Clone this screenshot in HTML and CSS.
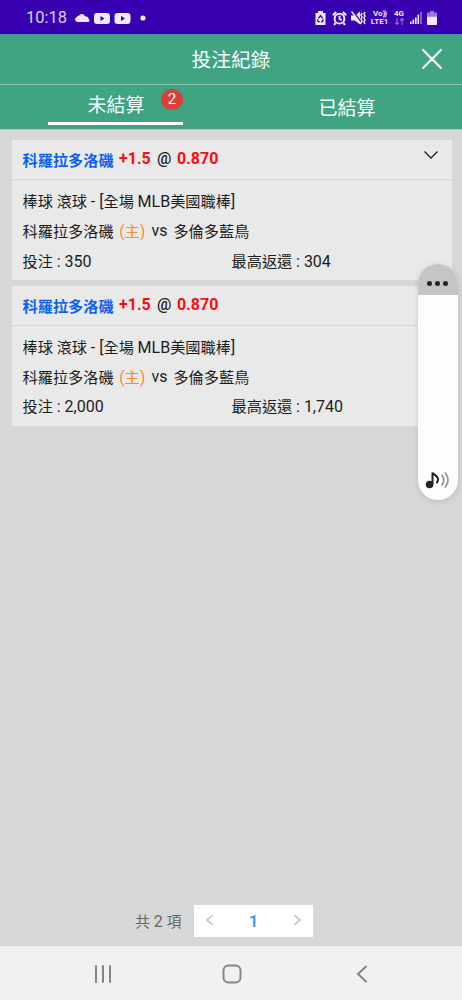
FILE: index.html
```html
<!DOCTYPE html>
<html lang="zh-Hant">
<head>
<meta charset="utf-8">
<title>投注紀錄</title>
<link rel="stylesheet" href="styles.css">
</head>
<body>
<div class="status">
  <span class="clock">10:18</span>
  <svg class="notices" width="76" height="16" viewBox="0 0 76 16">
    <path class="fill" d="M3 13a2.700 2.700 0 0 1-.2-5.100C3.500 7 4.300 6.700 5 6.800 6.500 4.300 10 4.700 11 7.200c2 .1 3.500 1 3.800 3 1 .4 1 2.800-.8 2.800z"/>
    <rect class="fill" x="20" y="4" width="16" height="11" rx="3"/><path class="hole" d="M26.500 7v5l4-2.500z"/>
    <rect class="fill" x="40.500" y="4" width="16" height="11" rx="3"/><path class="hole" d="M47 7v5l4-2.500z"/>
    <circle class="fill" cx="69" cy="9" r="2.600"/>
  </svg>
  <svg class="battery-saver" width="11" height="16" viewBox="0 0 11 16">
    <path class="fill" d="M3 1h5v2h2.500v12H.5V3H3z"/>
    <path class="hole-line" d="M3.300 8.400 5.500 5.500 7.700 8.400M8.300 9.500 7.500 11.700H6M4.800 11.700H3L2.500 9.500"/>
  </svg>
  <svg class="alarm" width="15" height="16" viewBox="0 0 15 16">
    <circle class="ring" cx="7.500" cy="8.700" r="4.900"/><path class="ring" d="M7.500 5.700v3.300l2.200 1.200"/>
    <path class="ring" d="M.8 5.200 4.200 2.100M14.200 5.200 10.800 2.100M3.600 13 2 14.800M11.400 13 13 14.800"/>
  </svg>
  <svg class="mute" width="15" height="16" viewBox="0 0 15 16">
    <path class="fill" d="M0 5.500h4l5-4v13l-5-4H0z"/><path class="slash" d="M1 .5 10.500 12.500"/><path class="thin" d="M.5 1.500 10 14"/>
    <path class="thin" d="M11 3 10 5 11 7 10 9 11 11 10 13M14 2 13 4 14 6 13 8 14 10 13 12 14 14"/>
  </svg>
  <span class="volte"><span class="vo">Vo<i>))</i></span><span>LTE1</span></span>
  <span class="net"><span>4G</span><svg class="arrows" width="11" height="8" viewBox="0 0 11 8"><path d="M3 0v6.500M1 4.500l2 2 2-2M8 7V.5M6 2.500l2-2 2 2"/></svg></span>
  <svg class="signal" width="12" height="14" viewBox="0 0 12 14">
    <path class="fill" d="M0 10.500h1.600V13H0zM2.500 8.500h1.600V13H2.500zM5 6.500h1.600V13H5zM7.500 3.500h1.600V13H7.500z"/><path class="faint" d="M10.200 1h1.600v12h-1.600z"/>
  </svg>
  <svg class="battery" width="10" height="15" viewBox="0 0 10 15">
    <path class="faint" d="M3 0h4v1.500h2q1 0 1 1V5.500H0v-3q0-1 1-1h2z"/><path class="fill" d="M0 5.500h10V13q0 1-1 1H1q-1 0-1-1z"/>
  </svg>
</div>

<header class="header">
  <h1>投注紀錄</h1>
  <svg class="close" width="22" height="22" viewBox="0 0 22 22"><path d="M2 2 20 20M20 2 2 20"/></svg>
</header>
<nav class="tabs">
  <div class="tab active"><span class="label">未結算</span><span class="badge">2</span></div>
  <div class="tab"><span class="label">已結算</span></div>
</nav>

<main class="main">
  <section class="card">
    <div class="card-head">
      <span class="team">科羅拉多洛磯</span><b class="odds handicap">+1.5</b><b class="at">@</b><b class="odds">0.870</b>
      <svg class="chevron" width="16" height="10" viewBox="0 0 16 10"><path d="M1.500 1.500 8 8 14.500 1.500"/></svg>
    </div>
    <div class="card-body">
      <div class="row league"><span>棒球 滾球 <em>- [</em>全場 <em>MLB</em>美國職棒<em>]</em></span></div>
      <div class="row"><span>科羅拉多洛磯</span><span class="host"><em>(</em>主<em>)</em></span><em class="vs">vs</em><span>多倫多藍鳥</span></div>
      <div class="row money"><span>投注 <em>: 350</em></span><span>最高返還 <em>: 304</em></span></div>
    </div>
  </section>
  <section class="card">
    <div class="card-head">
      <span class="team">科羅拉多洛磯</span><b class="odds handicap">+1.5</b><b class="at">@</b><b class="odds">0.870</b>
    </div>
    <div class="card-body">
      <div class="row league"><span>棒球 滾球 <em>- [</em>全場 <em>MLB</em>美國職棒<em>]</em></span></div>
      <div class="row"><span>科羅拉多洛磯</span><span class="host"><em>(</em>主<em>)</em></span><em class="vs">vs</em><span>多倫多藍鳥</span></div>
      <div class="row money"><span>投注 <em>: 2,000</em></span><span>最高返還 <em>: 1,740</em></span></div>
    </div>
  </section>
</main>

<footer class="pager">
  <span class="total">共 <em>2</em> 項</span>
  <div class="pages">
    <svg width="10" height="12" viewBox="0 0 10 12"><path d="M8 1 2 6l6 5"/></svg>
    <b>1</b>
    <svg width="10" height="12" viewBox="0 0 10 12"><path d="m2 1 6 5-6 5"/></svg>
  </div>
</footer>

<div class="navbar">
  <svg width="18" height="18" viewBox="0 0 18 18"><path d="M2 1v16M9 1v16M16 1v16"/></svg>
  <svg class="home" width="20" height="20" viewBox="0 0 20 20"><rect x="1.500" y="1.500" width="17" height="17" rx="5"/></svg>
  <svg width="12" height="18" viewBox="0 0 12 18"><path d="M10 1.500 2 9l8 7.500"/></svg>
</div>

<aside class="volume">
  <div class="volume-top"><i></i><i></i><i></i></div>
  <svg width="26" height="20" viewBox="0 0 26 20">
    <circle class="note" cx="4.600" cy="14.500" r="3.800"/><path class="stem" d="M7.500 14V2.500c.8 2.300 5.500 2.500 5.500 7.300 0 1.500-.5 2.500-1.600 3.300"/>
    <path class="wave" d="M17 5.500q3.600 4.500 0 9.500M20.500 3q5 7 0 14"/>
  </svg>
</aside>
</body>
</html>
```

FILE: styles.css
```css
* { box-sizing: border-box; }
body {
  margin: 0;
  width: 462px;
  height: 1000px;
  display: flex;
  flex-direction: column;
  overflow: hidden;
  position: relative;
  background: #d7d7d7;
  color: #1c1c1c;
  font-family: Roboto, "Noto Sans CJK TC", sans-serif;
}
svg { display: block; flex: none; }
em, i { font-style: normal; }

.status {
  height: 34px;
  flex: none;
  display: flex;
  align-items: center;
  padding: 2px 25px 0 26px;
  background: #3900b1;
  color: #efe6ff;
}
.clock { width: 48px; font-size: 16.500px; line-height: 32px; color: #ddcffa; }
.notices { margin-right: auto; margin-top: -2px; }
.fill { fill: #f0e9ff; }
.faint { fill: #9479d6; }
.hole { fill: #3900b1; }
.hole-line { fill: none; stroke: #3900b1; stroke-width: 1.300; }
.ring { fill: none; stroke: #f0e9ff; stroke-width: 2; }
.slash { stroke: #3900b1; stroke-width: 1.800; }
.thin { fill: none; stroke: #f0e9ff; stroke-width: 1.500; }
.battery-saver { margin-right: 6px; }
.mute { margin-left: 4px; }
.volte, .net {
  display: flex;
  flex-direction: column;
  align-items: center;
  font-size: 8px;
  line-height: 8px;
  font-weight: 700;
}
.volte { width: 19px; margin-left: 4px; }
.volte i { letter-spacing: -1px; }
.net { width: 12px; margin-left: 4px; }
.arrows { fill: none; stroke: #8868cf; stroke-width: 1.200; }
.signal { margin-left: 5px; }
.battery { margin-left: 5px; }

.header {
  height: 51px;
  flex: none;
  display: grid;
  grid-template-columns: 1fr auto 1fr;
  align-items: center;
  padding: 0 19px;
  background: #40a381;
  border-top: 1px solid #4f91a0;
  border-bottom: 1px solid #8bc6b2;
  color: #f5fffb;
}
.header h1 {
  grid-column: 2;
  margin: 2px 0 0;
  font-size: 19.800px;
  font-weight: 400;
  line-height: 30px;
}
.close { justify-self: end; margin-top: -2px; fill: none; stroke: #fff; stroke-width: 2.200; stroke-linecap: round; }
.tabs {
  height: 45px;
  flex: none;
  display: grid;
  grid-template-columns: 1fr 1fr;
  background: #40a381;
  border-bottom: 1px solid #a6cfc1;
}
.tab {
  position: relative;
  display: flex;
  justify-content: center;
  color: #f5fffb;
  font-size: 19px;
  line-height: 28px;
  padding: 10px 0 0 1px;
}
.tab.active { width: 135px; height: 40px; justify-self: center; padding-top: 7px; border-bottom: 3px solid #fff; }
.badge {
  position: absolute;
  top: 4px;
  right: 0;
  width: 22px;
  height: 21px;
  border-radius: 50%;
  background: #dc403b;
  font-size: 15px;
  line-height: 21px;
  text-align: center;
}

.main {
  flex: 1;
  display: flex;
  flex-direction: column;
  gap: 6px;
  padding: 10px 10px 0 12px;
}
.card { height: 140px; background: #e9e9e9; }
.card-head {
  height: 40px;
  display: flex;
  align-items: baseline;
  padding: 7px 13px 0 10.500px;
  border-bottom: 1px solid #d5d5d5;
  font-size: 16px;
  line-height: 24px;
}
.team { width: 96.500px; font-size: 15.200px; font-weight: 700; color: #0c61f3; position: relative; top: 2px; }
.odds { color: #fb0b0f; }
.handicap { width: 38px; }
.at { width: 20px; font-weight: 500; }
.chevron { margin-left: auto; align-self: flex-start; margin-top: 3px; fill: none; stroke: #222; stroke-width: 1.300; }
.card-body { padding: 7px 11px 0 10.500px; font-size: 15.200px; }
.row { display: flex; height: 30px; line-height: 30px; white-space: nowrap; }
.row em { font-size: 16px; }
.host { margin-left: 5.500px; color: #fb8c1a; }
.vs { margin: -1px 6px 0 6px; }
.money { display: grid; grid-template-columns: 209px 1fr; }
.card + .card .money { margin-top: -1px; }

.pager {
  display: flex;
  height: 32px;
  margin: 0 149px 9px 135px;
  justify-content: space-between;
  align-items: center;
  color: #666;
}
.total { font-size: 15px; white-space: nowrap; margin-top: -2px; }
.total em { font-size: 16px; }
.pages {
  width: 119px;
  height: 32px;
  margin-right: 0;
  padding: 0 11px;
  display: flex;
  justify-content: space-between;
  align-items: center;
  background: #fff;
}
.pages b { font-size: 16px; color: #419bff; }
.pages svg { margin-top: -2px; fill: none; stroke: #bfc2c7; stroke-width: 1.600; }

.navbar {
  height: 54px;
  flex: none;
  display: flex;
  justify-content: space-between;
  align-items: center;
  padding: 2px 94px 0 94px;
  background: #f1f1f1;
}
.navbar svg { fill: none; stroke: #858585; stroke-width: 2; stroke-linecap: round; }
.navbar .home { margin-right: 5px; }

.volume {
  position: absolute;
  left: 418px;
  top: 264px;
  width: 40px;
  height: 236px;
  border-radius: 20px;
  overflow: hidden;
  display: flex;
  flex-direction: column;
  justify-content: space-between;
  padding-bottom: 10px;
  background: #fdfdfd;
  box-shadow: 0 1px 6px rgba(0, 0, 0, .13);
}
.volume-top {
  height: 31px;
  display: flex;
  justify-content: center;
  gap: 3px;
  padding: 17px 1px 0 0;
  background: #c5c5c5;
}
.volume-top i { width: 5px; height: 5px; border-radius: 50%; background: #222; }
.volume svg { margin-left: 7px; }
.note { fill: #222; }
.stem { fill: none; stroke: #222; stroke-width: 2; }
.wave { fill: none; stroke: #999; stroke-width: 1.800; stroke-linecap: round; }
```
